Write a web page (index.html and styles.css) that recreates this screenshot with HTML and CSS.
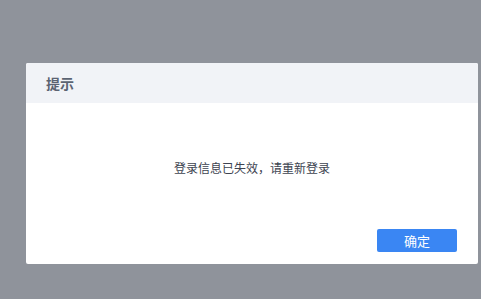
FILE: index.html
```html
<!DOCTYPE html>
<html lang="zh">
<head>
<meta charset="utf-8">
<link rel="stylesheet" href="styles.css">
</head>
<body>
<div class="overlay">
  <div class="dialog">
    <div class="dialog-header">提示</div>
    <div class="dialog-body">登录信息已失效，请重新登录</div>
    <div class="dialog-footer">
      <button class="btn-primary">确定</button>
    </div>
  </div>
</div>
</body>
</html>
```
FILE: styles.css
```css
html, body {
  margin: 0;
  padding: 0;
  width: 481px;
  height: 299px;
  overflow: hidden;
}
body {
  font-family: "Noto Sans CJK SC", "Liberation Sans", sans-serif;
}
.overlay {
  box-sizing: border-box;
  width: 481px;
  height: 299px;
  background: #8f939b;
  padding: 63px 0 0 26px;
}
.dialog {
  width: 452px;
  height: 201px;
  background: #ffffff;
  display: flex;
  flex-direction: column;
  border-radius: 2px;
}
.dialog-header {
  height: 40px;
  box-sizing: border-box;
  background: #f1f3f7;
  padding-left: 20px;
  display: flex;
  align-items: center;
  font-size: 14px;
  font-weight: bold;
  color: #5b6372;
  border-radius: 2px 2px 0 0;
}
.dialog-body {
  height: 126px;
  display: flex;
  align-items: center;
  justify-content: center;
  font-size: 12px;
  color: #3d4350;
  padding-top: 2px;
  box-sizing: border-box;
}
.dialog-footer {
  display: flex;
  justify-content: flex-end;
  padding-right: 21px;
}
.btn-primary {
  width: 80px;
  height: 23px;
  border: none;
  border-radius: 2px;
  background: #3a86f3;
  color: #ffffff;
  font-family: "Noto Sans CJK SC", sans-serif;
  font-size: 13px;
  padding: 0;
  line-height: 23px;
}
```
